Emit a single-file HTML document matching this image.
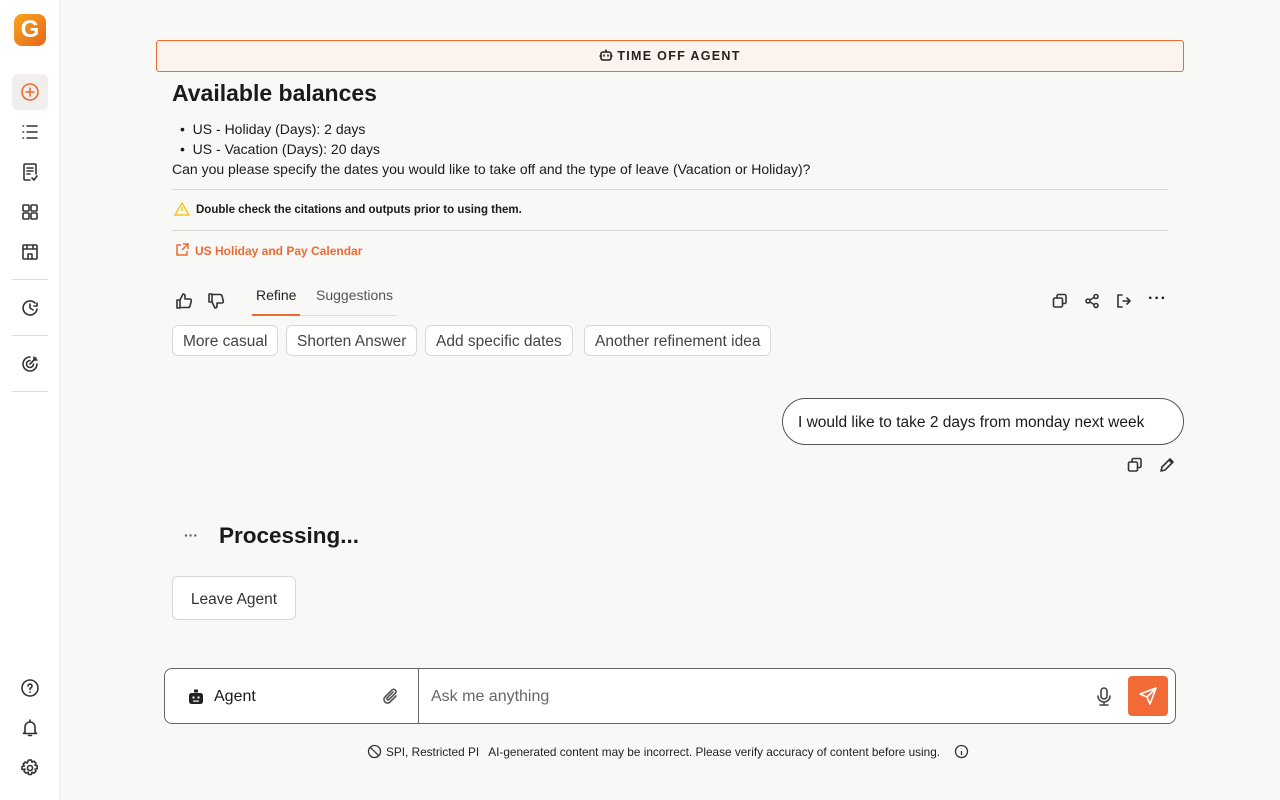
<!DOCTYPE html>
<html><head><meta charset="utf-8"><style>
*{box-sizing:border-box;margin:0;padding:0}
body{width:1280px;height:800px;background:#f8f8f7;font-family:"Liberation Sans",sans-serif;color:#1a1a1a;position:relative;overflow:hidden}
.side{position:absolute;left:0;top:0;width:60px;height:800px;background:#fff;border-right:1px solid #ececec}
.ic{position:absolute;left:20px;width:20px;height:20px}
.ic svg{width:20px;height:20px;fill:none;stroke:#333;stroke-width:1.6;stroke-linecap:round;stroke-linejoin:round}
.sep{position:absolute;left:12px;width:36px;height:1px;background:#ddd}
.abs{position:absolute}
svg.i{fill:none;stroke:#333;stroke-width:1.6;stroke-linecap:round;stroke-linejoin:round}
.chip{position:absolute;top:325px;height:31px;border:1px solid #d8d8d8;border-radius:6px;background:#fff;font-size:15.5px;color:#444;line-height:31px;padding:0 10px}
</style></head><body>
<div class="side">
 <div class="abs" style="left:14px;top:14px;width:32px;height:32px;border-radius:8px;background:linear-gradient(135deg,#f7a51c,#e8661c);color:#fff;font-weight:bold;font-size:24px;text-align:center;line-height:32px">G</div>
 <div class="abs" style="left:12px;top:74px;width:36px;height:36px;border-radius:6px;background:#f0efee"></div>
 <div class="ic" style="top:82px"><svg viewBox="0 0 20 20" style="stroke:#ee6a33"><circle cx="10" cy="10" r="8"/><path d="M10 6v8M6 10h8"/></svg></div>
 <div class="ic" style="top:122px"><svg viewBox="0 0 20 20"><path d="M7 4h10M7 10h10M7 16h10M3 4h.5M3 10h.5M3 16h.5"/></svg></div>
 <div class="ic" style="top:162px"><svg viewBox="0 0 20 20"><path d="M10 18H5a1 1 0 0 1-1-1V3a1 1 0 0 1 1-1h10a1 1 0 0 1 1 1v9M7 6h6M7 9h6M7 12h3M12 16l2 2 3-4"/></svg></div>
 <div class="ic" style="top:202px"><svg viewBox="0 0 20 20"><rect x="3" y="3" width="6" height="6" rx="1"/><rect x="11" y="3" width="6" height="6" rx="1"/><rect x="3" y="11" width="6" height="6" rx="1"/><rect x="11" y="11" width="6" height="6" rx="1"/></svg></div>
 <div class="ic" style="top:242px"><svg viewBox="0 0 20 20"><rect x="3" y="3" width="14" height="14" rx="1"/><path d="M3 7h14M8 17v-5h4v5M7 3v4M13 3v4"/></svg></div>
 <div class="sep" style="top:279px"></div>
 <div class="ic" style="top:298px"><svg viewBox="0 0 20 20"><path d="M17 11a7 7 0 1 1-2-6M10 6v4l3 2M17 5v3h-3"/></svg></div>
 <div class="sep" style="top:335px"></div>
 <div class="ic" style="top:354px"><svg viewBox="0 0 20 20"><path d="M17 10a7 7 0 1 1-7-7M13.5 10a3.5 3.5 0 1 1-3.5-3.5M10 10l6-6M14 3v3h3"/></svg></div>
 <div class="sep" style="top:391px"></div>
 <div class="ic" style="top:678px"><svg viewBox="0 0 20 20"><circle cx="10" cy="10" r="8"/><path d="M8 8a2 2 0 1 1 2.5 2c-.5.2-.5.6-.5 1.5M10 14v.2"/></svg></div>
 <div class="ic" style="top:718px"><svg viewBox="0 0 20 20"><path d="M5 14V9a5 5 0 0 1 10 0v5l1.5 1.5h-13zM8.5 17.5h3M10 2v2"/></svg></div>
 <div class="ic" style="top:758px"><svg viewBox="0 0 20 20"><circle cx="10" cy="10" r="2.5"/><path d="M8.5 2h3l.5 2.2 2-1 2 2-1 2 2.2.5v3l-2.2.5 1 2-2 2-2-1-.5 2.2h-3l-.5-2.2-2 1-2-2 1-2L2 11.5v-3l2.2-.5-1-2 2-2 2 1z"/></svg></div>
</div>

<div class="abs" style="left:156px;top:40px;width:1028px;height:32px;border:1px solid #ee6a33;border-radius:3px;background:#fdf3ee;text-align:center;font-size:12.5px;letter-spacing:1.3px;line-height:30px;font-weight:bold;color:#222">
<svg class="i" width="14" height="14" viewBox="0 0 14 14" style="vertical-align:-2px;margin-right:4px;stroke:#222"><rect x="2" y="4" width="10" height="8" rx="2"/><path d="M7 2v2M5 7v1M9 7v1M1 8h1M12 8h1"/></svg>TIME OFF AGENT</div>

<div class="abs" style="left:172px;top:80px;font-size:23px;font-weight:bold">Available balances</div>
<div class="abs" style="left:180px;top:119px;font-size:14px;line-height:20px">•&nbsp; US - Holiday (Days): 2 days<br>•&nbsp; US - Vacation (Days): 20 days</div>
<div class="abs" style="left:172px;top:159px;font-size:14px;line-height:20px">Can you please specify the dates you would like to take off and the type of leave (Vacation or Holiday)?</div>
<div class="abs" style="left:172px;top:189px;width:996px;height:1px;background:#d6d6d6"></div>
<div class="abs" style="left:174px;top:202px;font-size:11.5px;font-weight:bold"><svg width="16" height="14" viewBox="0 0 16 14" style="vertical-align:-3px;margin-right:6px" fill="none" stroke="#f5c518" stroke-width="1.4"><path d="M8 1L15 13H1z"/><path d="M8 5v4M8 11v.3"/></svg>Double check the citations and outputs prior to using them.</div>
<div class="abs" style="left:172px;top:230px;width:996px;height:1px;background:#d6d6d6"></div>
<div class="abs" style="left:175px;top:243px;font-size:12px;color:#ee6a33;font-weight:bold"><svg width="14" height="14" viewBox="0 0 14 14" style="vertical-align:-2px;margin-right:6px" fill="none" stroke="#ee6a33" stroke-width="1.5"><path d="M6 2H2v10h10V8M8 1h5v5M13 1L7 7"/></svg>US Holiday and Pay Calendar</div>

<svg class="i abs" style="left:175px;top:292px" width="18" height="18" viewBox="0 0 18 18"><path d="M2 8h3v8H2zM5 8l3-6c1.5 0 2 1 2 2v3h5c1 0 1.5 1 1.3 2l-1.3 5c-.2.8-1 1.5-2 1.5H5"/></svg>
<svg class="i abs" style="left:207px;top:292px" width="18" height="18" viewBox="0 0 18 18"><path d="M2 2h3v8H2zM5 10l3 6c1.5 0 2-1 2-2v-3h5c1 0 1.5-1 1.3-2L15 4c-.2-.8-1-1.5-2-1.5H5"/></svg>
<div class="abs" style="left:252px;top:315px;width:145px;height:1px;background:#ddd"></div>
<div class="abs" style="left:252px;top:314px;width:48px;height:2px;background:#ee6a33"></div>
<div class="abs" style="left:256px;top:287px;font-size:14px;color:#222">Refine</div>
<div class="abs" style="left:316px;top:287px;font-size:14px;color:#555">Suggestions</div>

<svg class="i abs" style="left:1052px;top:293px" width="16" height="16" viewBox="0 0 16 16"><rect x="1.5" y="5" width="9" height="9" rx="1.5"/><path d="M5 5V3a1.5 1.5 0 0 1 1.5-1.5h6A1.5 1.5 0 0 1 14 3v6a1.5 1.5 0 0 1-1.5 1.5h-2"/></svg>
<svg class="i abs" style="left:1084px;top:293px" width="16" height="16" viewBox="0 0 16 16"><circle cx="12" cy="3.5" r="2"/><circle cx="4" cy="8" r="2"/><circle cx="12" cy="12.5" r="2"/><path d="M6 7l4-2.5M6 9l4 2.5"/></svg>
<svg class="i abs" style="left:1116px;top:293px" width="16" height="16" viewBox="0 0 16 16"><path d="M6 2H2v12h4M7 8h7M11 5l3 3-3 3"/></svg>
<div class="abs" style="left:1148px;top:290px;font-size:16px;font-weight:bold;letter-spacing:1px">···</div>

<div class="chip" style="left:172px">More casual</div>
<div class="chip" style="left:286px">Shorten Answer</div>
<div class="chip" style="left:425px">Add specific dates</div>
<div class="chip" style="left:584px">Another refinement idea</div>

<div class="abs" style="left:782px;top:398px;width:402px;height:47px;border:1px solid #555;border-radius:24px;background:#fff;font-size:15.5px;line-height:47px;padding-left:15px">I would like to take 2 days from monday next week</div>
<svg class="i abs" style="left:1127px;top:457px" width="16" height="16" viewBox="0 0 16 16"><rect x="1.5" y="5" width="9" height="9" rx="1.5"/><path d="M5 5V3a1.5 1.5 0 0 1 1.5-1.5h6A1.5 1.5 0 0 1 14 3v6a1.5 1.5 0 0 1-1.5 1.5h-2"/></svg>
<svg class="i abs" style="left:1159px;top:457px" width="16" height="16" viewBox="0 0 16 16"><path d="M2 14l1-4 8-8 3 3-8 8zM10 3l3 3"/></svg>

<div class="abs" style="left:184px;top:527px;font-size:14px;font-weight:bold;color:#555">···</div>
<div class="abs" style="left:219px;top:523px;font-size:22.5px;font-weight:bold">Processing...</div>
<div class="abs" style="left:172px;top:576px;width:124px;height:44px;border:1px solid #d8d8d8;border-radius:6px;background:#fff;font-size:15.5px;line-height:45px;text-align:center;color:#333">Leave Agent</div>

<div class="abs" style="left:164px;top:668px;width:1012px;height:56px;border:1px solid #666;border-radius:8px;background:#fff"></div>
<div class="abs" style="left:418px;top:669px;width:1px;height:54px;background:#666"></div>
<svg class="abs" style="left:187px;top:688px" width="18" height="18" viewBox="0 0 18 18"><rect x="2" y="5" width="14" height="11" rx="2.5" fill="#222"/><rect x="7" y="1.5" width="4" height="3" fill="#222"/><rect x="5.5" y="8.5" width="2" height="2" fill="#fff"/><rect x="10.5" y="8.5" width="2" height="2" fill="#fff"/><rect x="6" y="12.5" width="6" height="1.2" fill="#fff"/></svg>
<div class="abs" style="left:214px;top:688px;font-size:16px">Agent</div>
<svg class="i abs" style="left:382px;top:687px;stroke:#555" width="18" height="20" viewBox="0 0 18 20"><path d="M14 9l-6 6a3.5 3.5 0 0 1-5-5l7-7a2.3 2.3 0 0 1 3.3 3.3L7 12.5a1.2 1.2 0 0 1-1.7-1.7L11 5"/></svg>
<div class="abs" style="left:431px;top:688px;font-size:16px;color:#666">Ask me anything</div>
<svg class="i abs" style="left:1095px;top:686px;stroke:#444" width="18" height="20" viewBox="0 0 18 20"><rect x="6" y="2" width="6" height="11" rx="3"/><path d="M3 10a6 6 0 0 0 12 0M9 16v3M5 19h8"/></svg>
<div class="abs" style="left:1128px;top:676px;width:40px;height:40px;border-radius:4px;background:#f26a36"></div>
<svg class="abs" style="left:1138px;top:686px" width="20" height="20" viewBox="0 0 20 20" fill="none" stroke="#fff" stroke-width="1.6" stroke-linejoin="round"><path d="M18 2L2 8l7 3 3 7zM18 2L9 11"/></svg>

<div class="abs" style="left:367px;top:744px;font-size:11.8px;color:#222;white-space:nowrap"><svg width="15" height="15" viewBox="0 0 15 15" style="vertical-align:-3px;margin-right:4px" fill="none" stroke="#333" stroke-width="1.3"><circle cx="7.5" cy="7.5" r="6"/><path d="M3.3 3.3l8.4 8.4"/></svg>SPI, Restricted PI &nbsp; AI-generated content may be incorrect. Please verify accuracy of content before using. &nbsp; <svg width="15" height="15" viewBox="0 0 15 15" style="vertical-align:-3px;margin-left:4px" fill="none" stroke="#333" stroke-width="1.3"><circle cx="7.5" cy="7.5" r="6"/><path d="M7.5 7v4M7.5 4.5v.3"/></svg></div>
</body></html>
